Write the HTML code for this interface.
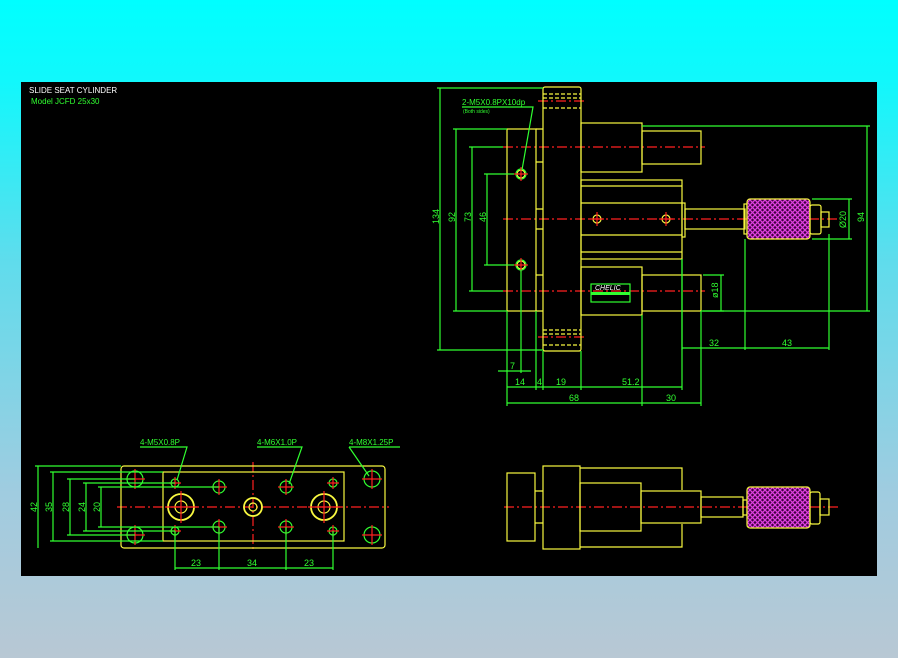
<!DOCTYPE html>
<html><head><meta charset="utf-8"><style>
html,body{margin:0;padding:0}
body{width:898px;height:658px;overflow:hidden;background:linear-gradient(#00ffff 0%,#10f8fc 12%,#60dcec 40%,#a0cce0 75%,#b8c8d4 100%);position:relative}
svg{position:absolute;left:0;top:0}
text{font-family:"Liberation Sans",sans-serif}
</style></head><body>
<svg width="898" height="658" viewBox="0 0 898 658" fill="none" stroke-width="1.2">
<defs>
<pattern id="kn" width="5" height="5" patternUnits="userSpaceOnUse">
<rect width="5" height="5" fill="#400040"/>
<path d="M0 0L5 5M5 0L0 5" stroke="#e040e0" stroke-width="1.3"/>
</pattern>
</defs>
<rect x="21" y="82" width="856" height="494" fill="#000"/>
<text x="29" y="93" fill="#fff" font-size="8">SLIDE SEAT CYLINDER</text>
<text x="31" y="104" fill="#30ff30" font-size="8">Model  JCFD 25x30</text>

<g stroke="#ff2020" stroke-dasharray="10,3,2,3">
<line x1="538" y1="101" x2="586" y2="101"/><line x1="538" y1="337" x2="586" y2="337"/>
<line x1="503" y1="147" x2="705" y2="147"/><line x1="503" y1="219" x2="838" y2="219"/><line x1="503" y1="291" x2="705" y2="291"/>
<line x1="117" y1="507" x2="389" y2="507"/><line x1="253" y1="462" x2="253" y2="552"/>
<line x1="504" y1="507" x2="838" y2="507"/>
</g>

<g stroke="#f8f840">
<rect x="543" y="87" width="38" height="264" rx="2"/>
<g stroke-dasharray="4,2"><line x1="543" y1="94" x2="581" y2="94"/><line x1="543" y1="98" x2="581" y2="98"/><line x1="543" y1="108" x2="581" y2="108"/>
<line x1="543" y1="330" x2="581" y2="330"/><line x1="543" y1="334" x2="581" y2="334"/><line x1="543" y1="345" x2="581" y2="345"/></g>
<rect x="507" y="129" width="29" height="182"/>
<path d="M536 129H543M536 162H543M536 209H543M536 229H543M536 275H543M536 311H543"/>
<rect x="581" y="123" width="61" height="49"/><rect x="642" y="131" width="59" height="33"/>
<rect x="581" y="267" width="61" height="48"/><rect x="642" y="275" width="59" height="36"/>
<rect x="581" y="180" width="101" height="79"/>
<path d="M581 186H682M581 203H682M581 235H682M581 252H682"/>
<rect x="682" y="203" width="3" height="34"/>
<rect x="685" y="209" width="60" height="20"/>
<rect x="744" y="204" width="3" height="30"/>
<rect x="747" y="199" width="63" height="40" rx="3" fill="url(#kn)"/>
<rect x="810" y="205" width="11" height="29" rx="2"/><rect x="821" y="212" width="8" height="15"/>
<circle cx="521" cy="174" r="4"/><circle cx="521" cy="265" r="4"/>
<circle cx="597" cy="219" r="4"/><circle cx="666" cy="219" r="4"/>
<rect x="121" y="466" width="264" height="82" rx="3"/>
<rect x="163" y="472" width="181" height="69"/>
<circle cx="181" cy="507" r="13" stroke-width="1.8"/><circle cx="181" cy="507" r="6"/>
<circle cx="324" cy="507" r="13" stroke-width="1.8"/><circle cx="324" cy="507" r="6"/>
<circle cx="253" cy="507" r="9" stroke-width="1.8"/><circle cx="253" cy="507" r="4"/>
<rect x="507" y="473" width="28" height="68"/>
<path d="M535 491H543M535 523H543"/>
<rect x="543" y="466" width="37" height="83"/>
<path d="M580 468H682V490M580 547H682V524"/>
<rect x="580" y="483" width="61" height="48"/>
<rect x="641" y="491" width="60" height="32"/>
<rect x="701" y="497" width="42" height="20"/>
<rect x="743" y="500" width="4" height="15"/>
<rect x="747" y="487" width="63" height="41" rx="3" fill="url(#kn)"/>
<rect x="810" y="492" width="10" height="32" rx="2"/><rect x="820" y="499" width="9" height="16"/>
</g>
<g stroke="#30ff30">
<circle cx="175" cy="483" r="4"/><circle cx="175" cy="531" r="4"/><circle cx="333" cy="483" r="4"/><circle cx="333" cy="531" r="4"/>
<circle cx="219" cy="487" r="6"/><circle cx="219" cy="527" r="6"/><circle cx="286" cy="487" r="6"/><circle cx="286" cy="527" r="6"/>
<circle cx="135" cy="479" r="8"/><circle cx="135" cy="535" r="8"/><circle cx="372" cy="479" r="8"/><circle cx="372" cy="535" r="8"/>
<circle cx="521" cy="174" r="5"/><circle cx="521" cy="265" r="5"/>
</g>
<g stroke="#ff2020">
<path d="M169 483h12M175 477v12M169 531h12M175 525v12M327 483h12M333 477v12M327 531h12M333 525v12"/>
<path d="M211 487h16M219 479v16M211 527h16M219 519v16M278 487h16M286 479v16M278 527h16M286 519v16"/>
<path d="M125 479h20M135 469v20M125 535h20M135 525v20M362 479h20M372 469v20M362 535h20M372 525v20"/>
<path d="M165 507h32M181 491v32M308 507h32M324 491v32"/>
<path d="M514 174h14M521 167v14M514 265h14M521 258v14M590 219h14M597 212v14M659 219h14M666 212v14"/>
</g>

<g stroke="#30ff30">
<path d="M440 88V350M437 88H543M437 350H543"/>
<path d="M456 129V311M453 129H507M453 311H507"/>
<path d="M472 147V291M469 147H503M469 291H503"/>
<path d="M487 174V265M484 174H514M484 265H514"/>
<path d="M867 126V311M642 126H870M701 311H870"/>
<path d="M849 199V239M812 199H852M812 239H852"/>
<path d="M721 275V311M703 275H724M703 311H724"/>
<path d="M682 348H829M682 259V350M745 239V350M829 234V350"/>
<path d="M498 371H531M521 270V373M507 311V406M536 311V390M543 351V390M581 351V390M642 315V406M701 311V406"/>
<path d="M507 387H682M682 259V390"/>
<path d="M507 403H701"/>
<path d="M462 107H533L522 170"/>
<path d="M38 466V548M35 466H121M53 472V541M50 472H163M70 479V535M67 479H135M86 483V531M83 483H175M101 487V527M98 487H219"/>
<path d="M67 535H135M83 531H175M98 527H219M50 541H163"/>
<path d="M140 447H187L177 480M257 447H302L289 484M349 447H400M349 447L369 476"/>
<path d="M175 531V570M219 527V570M286 527V570M333 531V570M175 568H333"/>
<rect x="591" y="284" width="39" height="18"/>
</g>
<rect x="591" y="292" width="39" height="3" fill="#30ff30"/>
<g fill="#30ff30" font-size="8">
<text x="462" y="105">2-M5X0.8PX10dp</text>
<text x="463" y="113" font-size="5">(Both sides)</text>
<text x="595" y="290" fill="#fff" font-size="7" font-style="italic">CHELIC</text>
<text x="709" y="346" font-size="9">32</text><text x="782" y="346" font-size="9">43</text>
<text x="510" y="369" font-size="9">7</text>
<text x="515" y="385" font-size="9">14</text><text x="537" y="385" font-size="9">4</text><text x="556" y="385" font-size="9">19</text><text x="622" y="385" font-size="9">51.2</text>
<text x="569" y="401" font-size="9">68</text><text x="666" y="401" font-size="9">30</text>
<text x="140" y="445">4-M5X0.8P</text><text x="257" y="445">4-M6X1.0P</text><text x="349" y="445">4-M8X1.25P</text>
<text x="191" y="566" font-size="9">23</text><text x="247" y="566" font-size="9">34</text><text x="304" y="566" font-size="9">23</text>
<g font-size="9">
<text transform="translate(439,224) rotate(-90)">134</text>
<text transform="translate(455,222) rotate(-90)">92</text>
<text transform="translate(471,222) rotate(-90)">73</text>
<text transform="translate(486,222) rotate(-90)">46</text>
<text transform="translate(864,222) rotate(-90)">94</text>
<text transform="translate(846,228) rotate(-90)">Ø20</text>
<text transform="translate(718,298) rotate(-90)">ø18</text>
<text transform="translate(37,512) rotate(-90)">42</text>
<text transform="translate(52,512) rotate(-90)">35</text>
<text transform="translate(69,512) rotate(-90)">28</text>
<text transform="translate(85,512) rotate(-90)">24</text>
<text transform="translate(100,512) rotate(-90)">20</text>
</g>
</g>
</svg>
</body></html>
